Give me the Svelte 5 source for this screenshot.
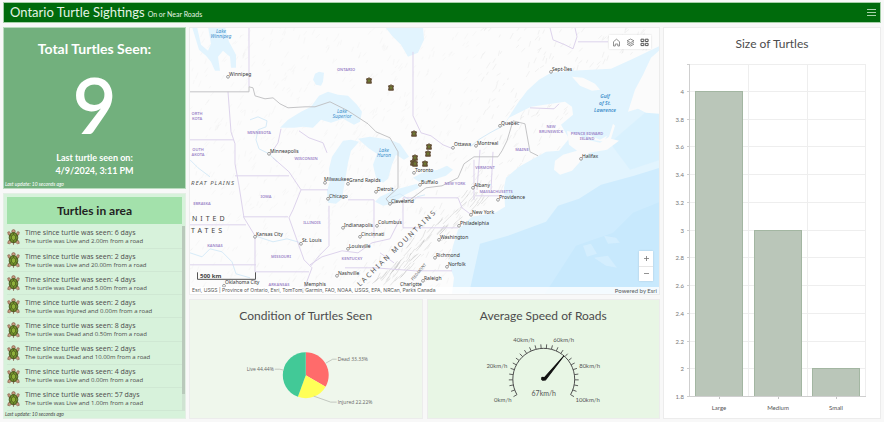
<script>
  const sightings = [
    { days: 6, state: 'Live', distance: '2.00' },
    { days: 2, state: 'Live', distance: '20.00' },
    { days: 4, state: 'Dead', distance: '5.00' },
    { days: 2, state: 'Injured', distance: '0.00' },
    { days: 8, state: 'Dead', distance: '0.50' },
    { days: 2, state: 'Dead', distance: '10.00' },
    { days: 4, state: 'Live', distance: '0.00' },
    { days: 57, state: 'Live', distance: '1.00' }
  ];

  // name, dot x, dot y, label x, label y
  const cities = [
    ['Winnipeg', 228, 77, 229, 76],
    ['Minneapolis', 269, 154, 270, 153],
    ['Ottawa', 453, 148, 454, 146],
    ['Montreal', 476, 146, 477, 145],
    ['Quebec', 500, 126, 501, 125],
    ['Sept-Îles', 551, 72, 552, 71],
    ['Halifax', 581, 159, 582, 158],
    ['Toronto', 414, 173, 415, 172],
    ['Buffalo', 420, 185, 421, 184],
    ['Detroit', 376, 192, 377, 191],
    ['Cleveland', 390, 204, 391, 203],
    ['Albany', 473, 188, 474, 187],
    ['Providence', 498, 200, 499, 199],
    ['New York', 471, 215, 472, 214],
    ['Philadelphia', 459, 226, 460, 225],
    ['Washington', 439, 240, 440, 239],
    ['Richmond', 435, 258, 436, 257],
    ['Norfolk', 447, 267, 448, 266],
    ['Raleigh', 423, 281, 424, 280],
    ['Charlotte', 414, 288, 400, 286],
    ['Columbus', 377, 226, 378, 224],
    ['Cincinnati', 360, 237, 361, 236],
    ['Louisville', 348, 249, 349, 248],
    ['Indianapolis', 343, 228, 344, 227],
    ['Nashville', 337, 276, 338, 275],
    ['Grand Rapids', 348, 184, 349, 182],
    ['Milwaukee', 325, 183, 324, 181],
    ['Chicago', 328, 199, 329, 198],
    ['Kansas City', 255, 237, 256, 236],
    ['St. Louis', 301, 244, 302, 242],
    ['Memphis', 303, 290, 304, 286],
    ['Oklahoma City', 224, 286, 225, 284]
  ];

  const regions = [
    ['ONTARIO', 346, 71], ['MINNESOTA', 259, 134], ['WISCONSIN', 306, 160],
    ['ORTH', 197, 115], ['KOTA', 197, 120], ['OUTH', 198, 151], ['AKOTA', 198, 156],
    ['IOWA', 266, 198], ['EBRASKA', 202, 205], ['ILLINOIS', 312, 224], ['KANSAS', 215, 247],
    ['MISSOURI', 281, 258], ['ARKANSAS', 279, 286], ['KENTUCKY', 352, 260],
    ['NEW YORK', 455, 185], ['VERMONT', 485, 169], ['MASSACHUSETTS', 496, 193],
    ['MAINE', 522, 151], ['NEW', 551, 128], ['BRUNSWICK', 551, 133],
    ['PRINCE EDWARD', 587, 135], ['ISLAND', 587, 140]
  ];

  const waters = [
    ['Lake', 221, 33], ['Winnipeg', 221, 38], ['Lake', 342, 113], ['Superior', 342, 118],
    ['Lake', 384, 152], ['Huron', 384, 157]
  ];
  const gulf = [['Gulf', 605, 98], ['of St.', 605, 105], ['Lawrence', 605, 112]];

  const markers = [[369, 81], [391, 88], [414, 134], [429, 147], [428, 154], [415, 158], [413, 163], [425, 164], [415, 164]];

  // short relief strokes scattered over the land
  let seed = 7;
  const rnd = () => (seed = (seed * 16807) % 2147483647) / 2147483647;
  const relief = Array.from({ length: 1300 }, () => {
    const x = 189 + rnd() * 471;
    const y = 27 + rnd() * 265;
    const ridge = x + y > 630 && x + y < 710 && x > 345 && x < 480;
    return { d: `M${x.toFixed(1)} ${y.toFixed(1)}l${(1 + rnd() * 3).toFixed(1)} ${(-2 - rnd() * 4).toFixed(1)}`, o: ridge ? 0.14 : x > 480 ? 0.12 : 0.05 };
  });
  const ridges = Array.from({ length: 60 }, () => {
    const t = rnd();
    const x = 362 + t * 100 + rnd() * 24;
    const y = 284 - t * 90 + rnd() * 10;
    return `M${x.toFixed(1)} ${y.toFixed(1)}q3 -3 ${(5 + rnd() * 4).toFixed(1)} ${(-6 - rnd() * 5).toFixed(1)}`;
  });

  const polar = (cx, cy, r, deg) => {
    const a = ((deg - 90) * Math.PI) / 180;
    return [cx + r * Math.cos(a), cy + r * Math.sin(a)];
  };
  const slice = (from, to) => {
    const [x1, y1] = polar(306, 376, 23, from);
    const [x2, y2] = polar(306, 376, 23, to);
    return `M306 376L${x1} ${y1}A23 23 0 0 1 ${x2} ${y2}Z`;
  };
  const ticks = Array.from({ length: 26 }, (_, i) => {
    const deg = -120 + i * 9.6;
    return [polar(543, 380, 31, deg), polar(543, 380, 35, deg)];
  });
  const gaugeLabels = [
    ['0km/h', 502, 403], ['20km/h', 496, 369], ['40km/h', 523, 343],
    ['60km/h', 563, 343], ['80km/h', 589, 369], ['100km/h', 587, 403]
  ];

  const levels = ['4', '3.8', '3.6', '3.4', '3.2', '3', '2.8', '2.6', '2.4', '2.2', '2', '1.8'];
  const yOf = (v) => 397 - ((v - 1.8) / 2.2) * 305;
  const bars = [
    { name: 'Large', value: 4, x: 719 },
    { name: 'Medium', value: 3, x: 778 },
    { name: 'Small', value: 2, x: 836 }
  ];
</script>

<div class="app">
  <header>
    <h1>Ontario Turtle Sightings</h1>
    <span>On or Near Roads</span>
    <button class="menu" aria-label="Menu">
      <svg width="9" height="9" viewBox="0 0 9 9"><path d="M0 1.5h9M0 4.5h9M0 7.5h9" /></svg>
    </button>
  </header>

  <main>
    <div class="col left">
      <section class="total">
        <h2>Total Turtles Seen:</h2>
        <div class="count">9</div>
        <p>Last turtle seen on:<br />4/9/2024, 3:11 PM</p>
        <small>Last update: 10 seconds ago</small>
      </section>

      <section class="area">
        <h2>Turtles in area</h2>
        <div class="body">
          <ul>
            {#each sightings as s}
              <li>
                <svg class="turtle" viewBox="0 0 13 16">
                  <g fill="#c79a80" stroke="#7a4f3c" stroke-width=".6">
                    <circle cx="6.5" cy="2.3" r="1.7" />
                    <path d="M4 5L2.3 2.6.7 3.2l.6 2.6 2 1.4zM9 5l1.7-2.4 1.6.6-.6 2.6-2 1.4zM4 11l-2.6.8-.7 2.5 1.7.5L5 13zM9 11l2.6.8.7 2.5-1.7.5L8 13z" />
                    <path d="M6 13h1l-.5 2.6z" />
                  </g>
                  <ellipse cx="6.5" cy="8.6" rx="4.3" ry="5" fill="#6f8f2c" stroke="#44511c" stroke-width=".9" />
                  <path d="M6.5 5.8l2 1.3v2.8l-2 1.5-2-1.5V7.1zM6.5 3.8v2M8.5 7.1l2-1M8.5 9.9l1.8 1M4.5 9.9l-1.8 1M4.5 7.1l-2-1M6.5 11.4v2" fill="#8fb13a" stroke="#44511c" stroke-width=".6" />
                </svg>
                <div>
                  <strong>Time since turtle was seen: {s.days} days</strong>
                  <span>The turtle was {s.state} and {s.distance}m from a road</span>
                </div>
              </li>
            {/each}
          </ul>
          <div class="track"><div class="thumb"></div></div>
        </div>
        <small>Last update: 10 seconds ago</small>
      </section>
    </div>

    <div class="col middle">
      <section class="map">
        <svg viewBox="190 28 469 266" preserveAspectRatio="xMidYMid slice">
          <rect x="180" y="20" width="500" height="290" fill="#fcfcfc" />
          {#each relief as r}<path d={r.d} stroke="#777" stroke-width=".6" opacity={r.o} />{/each}
          {#each ridges as d}<path {d} stroke="#888" stroke-width=".7" fill="none" opacity=".3" />{/each}

          <g fill="#e2f4fe">
            <path d="M192 27h5l4 18 7 6 3-7-3-17h17l4 15 7 13v13h-5l-1-11-7-6-5 6 2 14h-5l-4-9-5-6-7-6z" />
            <path d="M315 74l4-2 5 1-1 9-2 4-5-1-3-5z" />
            <path d="M280 128l8-8 13-8 10-5 8-11 9-4 10 3 10 1 9 9 5 7-2 10-6 3-11-6-12 4-10-3-8 8-10-1-9 1z" />
            <path d="M385 27h38l1 13-6 13-10 4-7-12-9-9z" />
            <path d="M343 141l8-1 8 2-8 9-3 12-3 18-3 18-6 5-8-1-1-12 3-10-1-12 3-12z" />
            <path d="M358 139l12-2 20 3 10 4 9 13-5 3-8-5-4 10-4 14-5 4-7-5-3-13 4-11-9-6z" />
            <path d="M413 178l9-5 16-3 9-4 6 4-7 6-13 4-14 2z" />
            <path d="M375 202l5-5 15-7 22-6 2 4-14 7-13 9-9 2z" />
            <path d="M503 127l4-7 11-17 9-12 12-11 12-7 20-2 40-2 22-10 27-13V294H452l2-16-5-14 4-18 5-16 14-13 23-4 10-6-1-19 2-10 13-11 18-10 9-5 13-1 10-12-8-14 12-10-1-8-7-5-34 5-22 11z" />
          </g>
          <path d="M660 168l-26 8-33 9-22 14-21 7-12 16-38 14-28 8-11 50H660z" fill="#cfecfe" />
          <path d="M660 202l-27 11-20 20-37 13-31 48H660z" fill="#c8e9fd" />
          <path d="M610 143l50-43v60l-30 10z" fill="#d6effe" opacity=".7" />
          <g fill="#d8f0fe" opacity=".7">
            <path d="M604 236l12 2 4 5-12 1zM583 246l8-2 6 10-10 3zM594 258l14-2 9 12-11-2z" />
          </g>

          <g fill="#fbfbfb">
            <path d="M572 77l11 1 12 6 5 6-8 1-12-5z" />
            <path d="M660 50l-9 8-8 17-8 15-7 22 10-3 8 4 14 1z" />
            <path d="M567 131l10 3 10 6 13 3 9-6 4-13 2 2-4 13 8 2-12 9-18 3-8 8-9 10-12 4-6-5 1-9 8-6 14-4-8-6z" />
            <path d="M586 134l14 6 7-4-3 6-12-2z" />
          </g>

          <g fill="none" stroke="#d7ebf8" stroke-width="1">
            <path d="M250 120l8-3 9 4-1 6-8 3-2 10 3 9 10 5 8 8" />
            <path d="M190 160l8 8 12 9M190 253l12 4 8-8 12 3 10 10 4 12 14 4M255 236l9 3 9 3 14-3 14 4M390 198l10-4 13 8 4-5 8-2" />
            <path d="M470 147l10-8 10-6 13-7" />
          </g>
          <g fill="none" stroke="#ddd3ec" stroke-width="1">
            <path d="M249 28v59M413 52v64l8 17 10 3 12 9 10 4" />
            <path d="M228 92l3 40 4 12v20l4 22 5 32 11 18v36M190 140h44M235 176h54M243 217h45M190 225h56M190 265h66M255 272h54M273 158l16 14 12 18-8 20-4 8 10 28 5 14 8 8-9 24" />
            <path d="M299 131l10 7 14 5 4 10M281 129l-3 14-8 12M301 190h27M329 206v40l-10 10-8 10M310 265l12-8 20-6 16 2 14-10 18-4 10-20M348 200h26v38M403 198h55l4 10 8 6M403 198v30h55M380 253l14 10M345 268h30l40 3h37M474 160v40M476 196h28M480 150l-3 40M493 152l-2 38" />
            <path d="M550 28l3 12 12 5 8 4 4-12-2-9M578 42h30M530 108l24 1 5-5" />
          </g>
          <path d="M190 92h59v-5l4 1 2 8 10 3 8-1 7 6 8 4 17-1 10 0 15-5 18 9 20 13 8 8 14 6 8 14 0 36-12 11 4 5 20-4 16-12 16-2 16-8 6-14 10-7h24l4-6 5-10 6-20 12 3 5 28 8 4" fill="none" stroke="#bdbdc0" stroke-width=".9" />

          <g class="gulf">{#each gulf as [t, x, y]}<text {x} {y}>{t}</text>{/each}</g>
          <g class="waters">{#each waters as [t, x, y]}<text {x} {y}>{t}</text>{/each}</g>
          <g class="regions">{#each regions as [t, x, y]}<text {x} {y}>{t}</text>{/each}</g>
          <g class="land">
            <text x="191" y="185" class="plains">REAT PLAINS</text>
            <text x="192" y="221" class="country">NITED</text>
            <text x="191" y="233" class="country">TATES</text>
            <text class="hills" transform="translate(360 287) rotate(-44)">LACHIAN MOUNTAINS</text>
            <text class="piedmont" transform="translate(413 281) rotate(-50)">PIEDMONT</text>
          </g>
          <g class="cities">
            {#each cities as [name, cx, cy, x, y]}
              <circle {cx} {cy} r="1.4" />
              <text {x} {y}>{name}</text>
            {/each}
          </g>
          {#each markers as [x, y]}
            <g transform="translate({x} {y})">
              <path d="M-2.5-2L-1-2.2 0-3.2 1-2.2 2.5-2 2 0 2.4 2.4-2.4 2.4-2 0z" fill="#6b6136" stroke="#5a432f" stroke-width=".9" />
              <circle r="1" fill="#6d8230" />
            </g>
          {/each}
          <path d="M197.500 272.500v7h58v-7" fill="none" stroke="#555" />
          <text x="200" y="278" class="scale">500 km</text>
        </svg>
        <div class="tools">
          <button aria-label="Home"><svg viewBox="0 0 9 9"><path d="M1.500 8V3.700L4.500 1.200 7.500 3.700V8H5.800V6H3.300V8z" /></svg></button>
          <button aria-label="Layers"><svg viewBox="0 0 9 9"><path d="M4.500 1L8 2.800 4.500 4.600 1 2.800zM1 4.500l3.500 1.800L8 4.500M1 6.200L4.500 8 8 6.200" /></svg></button>
          <button aria-label="Basemaps"><svg viewBox="0 0 9 9" class="grid"><path d="M1 1.200h2.800v2.300H1zM5.300 1.200h2.800v2.300H5.300zM1 5.300h2.800v2.300H1zM5.300 5.300h2.800v2.300H5.300z" /></svg></button>
        </div>
        <div class="zoom">
          <button aria-label="Zoom in"><svg viewBox="0 0 9 9"><path d="M2 4.500h5M4.500 2v5" /></svg></button>
          <button aria-label="Zoom out"><svg viewBox="0 0 9 9"><path d="M2 4.500h5" /></svg></button>
        </div>
        <div class="credit">
          <span class="sources">Esri, USGS | Province of Ontario, Esri, TomTom, Garmin, FAO, NOAA, USGS, EPA, NRCan, Parks Canada</span>
          <span>Powered by Esri</span>
        </div>
      </section>

      <div class="pair">
        <section class="condition">
          <h2>Condition of Turtles Seen</h2>
          <svg viewBox="190 328 232 90">
            <path d={slice(0, 120)} fill="#ff6b6b" />
            <path d={slice(120, 200)} fill="#ffff57" />
            <path d={slice(200, 360)} fill="#42c997" />
            <path d="M326 364l7-4h4M314 397l17 6h6M284 371l-4-1h-5" fill="none" stroke="#b7bdb5" stroke-width=".8" />
            <g class="tiny">
              <text x="338" y="362">Dead 33.33%</text>
              <text x="338" y="405">Injured 22.22%</text>
              <text x="274" y="372" text-anchor="end">Live 44.44%</text>
            </g>
          </svg>
        </section>

        <section class="speed">
          <h2>Average Speed of Roads</h2>
          <svg viewBox="427 328 232 90">
            <path d="M516.1 395.500A31 31 0 1 1 569.900 395.500" fill="none" stroke="#4c4c4c" />
            {#each ticks as [a, b]}
              <path d="M{a[0]} {a[1]}L{b[0]} {b[1]}" stroke="#4c4c4c" stroke-width=".9" />
            {/each}
            <path d="M0 1.500h-1.500l-1-1.500.8-1 1.200-.3L0-31 1.800-.5z" fill="#111" stroke="#111" transform="translate(543 380) rotate(40.800)" />
            <g class="gauge">
              {#each gaugeLabels as [t, x, y]}<text {x} {y}>{t}</text>{/each}
              <text x="543" y="397" class="value">67km/h</text>
            </g>
          </svg>
        </section>
      </div>
    </div>

    <section class="sizes">
      <h2>Size of Turtles</h2>
      <svg viewBox="664 54 216 364">
        <g fill="none" stroke="#eeeeee">
          <path d="M689 64.500h177M748.500 64v333M807.500 64v333M865.500 64v333" />
          {#each levels as v}<path d="M689 {Math.round(yOf(+v)) - 0.5}h177" />{/each}
        </g>
        {#each bars as b}
          <rect x={b.x - 23.5} y={Math.round(yOf(b.value)) - 0.5} width="47" height={397 - Math.round(yOf(b.value))} fill="#bac6b9" stroke="#a3b6a2" />
          <text x={b.x} y="410" class="name">{b.name}</text>
          <path d="M{b.x + 0.5} 397v2" stroke="#c4c4c4" />
        {/each}
        <path d="M689.500 64v333M687 64.500h3M687 396.500h179" fill="none" stroke="#cfcfcf" />
        {#each levels as v}
          <path d="M687 {Math.round(yOf(+v)) - 0.5}h3" stroke="#cfcfcf" />
          <text x="684" y={Math.round(yOf(+v)) + 2} class="level">{v}</text>
        {/each}
      </svg>
    </section>
  </main>
</div>

<style>
  :global(body) { background: #f8f8f8; }
  .app {
    box-sizing: border-box;
    min-height: 100vh;
    padding: 2px 3px 3px;
    display: flex;
    flex-direction: column;
    gap: 4px;
    font-family: Lato, "Liberation Sans", sans-serif;
    color: #4c4c4c;
  }
  h1, h2, p, ul { margin: 0; padding: 0; font-weight: 400; }
  button { border: 0; padding: 0; background: none; display: flex; align-items: center; justify-content: center; }
  header {
    display: flex;
    align-items: baseline;
    gap: 3px;
    height: 19px;
    padding: 0 4px 0 6px;
    border: 1px solid #a5cfa8;
    background: #006b0c;
    color: #e4f3e4;
    line-height: 19px;
  }
  h1 { font-size: 13px; line-height: 18px; }
  header span { font-size: 7px; }
  .menu { margin-left: auto; align-self: center; }
  .menu path { stroke: #a8d3aa; stroke-width: 1; }
  main { flex: 1; display: grid; grid-template-columns: 183fr 471fr 218fr; gap: 3px; }
  .col { display: flex; flex-direction: column; gap: 4px; min-width: 0; }
  section { box-sizing: border-box; display: flex; flex-direction: column; border: 1px solid #ececec; min-width: 0; }
  section > svg { flex: 1 1 0; min-height: 0; width: 100%; }
  small { font-size: 5px; line-height: 7px; font-style: italic; padding-left: 1px; }

  .total { flex: 162 1 0; background: #72b07d; border-color: #b9dcbe; color: #fff; text-align: center; }
  .total h2 { font-size: 14px; line-height: 20px; font-weight: 700; padding-top: 11px; }
  .count { font-size: 76px; line-height: 92px; font-weight: 600; }
  .total p { font-size: 9px; line-height: 13px; font-weight: 700; }
  .total small { margin-top: auto; text-align: left; }

  .area { flex: 227 1 0; background: #d7f2db; border-color: #e3efe4; }
  .area h2 { margin: 3px 3px 0; font-size: 12px; line-height: 27px; font-weight: 700; text-align: center; color: #222; background: #a3e1ab; }
  .body { flex: 1; display: flex; padding-top: 2px; }
  ul { flex: 1; display: flex; flex-direction: column; list-style: none; padding-left: 3px; }
  li { flex: 1; display: flex; align-items: center; gap: 5px; border-bottom: 1px solid #cfe8d3; box-sizing: border-box; font-family: "Open Sans", sans-serif; }
  li strong, li span { display: block; font-weight: 400; white-space: nowrap; }
  li strong { font-size: 7px; line-height: 9px; }
  li span { font-size: 6px; line-height: 8px; }
  .turtle { width: 13px; height: 16px; }
  .track { width: 3px; background: #cfe3d2; }
  .thumb { height: 91%; background: #b9c9bb; }

  .map { flex: 267 1 0; position: relative; background: #fff; }
  .map text { text-anchor: start; }
  .cities circle { fill: #fff; stroke: #777; stroke-width: .7; }
  .cities text { font: 5px "Noto Sans", sans-serif; fill: #333; }
  .map .regions text { font: 600 4px "Noto Sans", sans-serif; fill: #9d87c9; text-anchor: middle; }
  .map .waters text { font: italic 5px "Noto Sans", sans-serif; fill: #3f8fcb; text-anchor: middle; }
  .map .gulf text { font: italic 600 5px "Noto Sans", sans-serif; fill: #3f8fcb; text-anchor: middle; }
  .land text { fill: #555; font-family: "Noto Sans", sans-serif; }
  .land .plains { font-size: 6px; font-style: italic; letter-spacing: 1px; }
  .land .country { font-size: 7px; letter-spacing: 3px; fill: #444; }
  .land .hills { font-size: 7px; letter-spacing: 2px; }
  .land .piedmont { font-size: 4px; }
  .scale { font: 700 6px "Noto Sans", sans-serif; fill: #444; }
  .tools, .zoom { position: absolute; background: #fff; display: flex; box-shadow: 0 0 2px #0002; }
  .tools { top: 7px; right: 8px; }
  .tools button { width: 14px; height: 14px; }
  .zoom { right: 6px; bottom: 13px; flex-direction: column; }
  .zoom button { width: 14px; height: 15px; }
  .zoom button + button { border-top: 1px solid #e6e6e6; }
  .tools svg, .zoom svg { width: 9px; height: 9px; fill: none; stroke: #777; stroke-width: .8; }
  .tools .grid { stroke: #555; stroke-width: 1; }
  .credit {
    position: absolute;
    inset: auto 0 0 0;
    display: flex;
    justify-content: space-between;
    padding: 0 2px;
    font-size: 6px;
    line-height: 7px;
    color: #5a5a5a;
    background: #fffc;
  }
  .sources { font-family: Inter, sans-serif; font-size: 5px; }

  .pair { flex: 121 1 0; display: flex; gap: 4px; }
  .pair section { flex: 1 1 0; }
  .pair h2 { padding-top: 6px; font-size: 12px; line-height: 20px; text-align: center; }
  .condition { background: #eff7ec; }
  .speed { background: #e8f6e5; }
  .tiny text { font-family: "Open Sans", sans-serif; font-size: 5px; fill: #666; }
  .gauge text { font-size: 6px; fill: #555; text-anchor: middle; }
  .gauge .value { font-size: 7px; }

  .sizes { background: #fff; }
  .sizes h2 { padding-top: 6px; font-size: 12px; line-height: 20px; text-align: center; }
  .name { font-size: 6px; fill: #555; text-anchor: middle; }
  .level { font-size: 6px; fill: #777; text-anchor: end; }
</style>
